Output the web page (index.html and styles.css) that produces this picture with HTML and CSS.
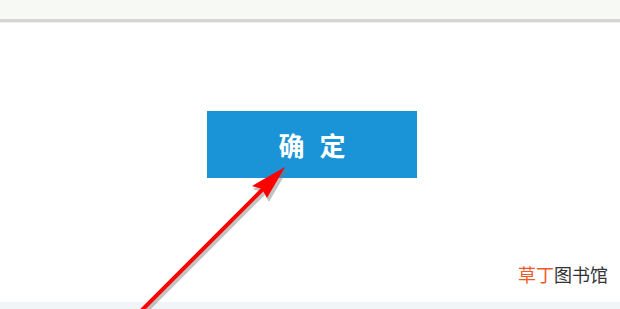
FILE: index.html
```html
<!DOCTYPE html>
<html lang="zh-CN">
<head>
    <meta charset="UTF-8">
    <title>确定</title>
    <link rel="stylesheet" href="styles.css">
</head>
<body>
    <div class="topbar"></div>
    <div class="main">
        <button class="ok-btn">确定</button>
        <div class="mark"><span class="mark-hi">草丁</span>图书馆</div>
    </div>
    <div class="footer-strip"></div>

    <!-- red annotation arrow drawn over the page -->
    <svg class="arrow" width="620" height="309" viewBox="0 0 620 309">
        <g transform="translate(2,3)" fill="#7a7a7a" stroke="#7a7a7a" opacity="0.45">
            <line x1="140" y1="312" x2="268" y2="184" stroke-width="4" />
            <polygon points="285,167 252,186 262,189 267,198" />
        </g>
        <line x1="140" y1="312" x2="268" y2="184" stroke="#ff0000" stroke-width="4" />
        <polygon points="285,167 252,186 262,189 267,198" fill="#ff0000" />
    </svg>
</body>
</html>
```

FILE: styles.css
```css
* {
    box-sizing: border-box;
}

body {
    margin: 0;
    width: 620px;
    height: 309px;
    overflow: hidden;
    background: #fff;
    font-family: "Noto Sans CJK SC", "Noto Sans", sans-serif;
    display: flex;
    flex-direction: column;
    position: relative;
}

.topbar {
    height: 22px;
    background: #f7f9f4;
    border-bottom: 3px solid #d6d7d5;
    box-shadow: 0 1px 0 #eeeeee;
}

.main {
    flex: 1;
    display: flex;
    flex-direction: column;
    align-items: flex-start;
}

.ok-btn {
    margin: 89px 0 0 207px;
    width: 210px;
    height: 67px;
    border: none;
    background: #1a94d6;
    color: #fff;
    font-family: inherit;
    font-size: 26px;
    font-weight: bold;
    letter-spacing: 15px;
    text-indent: 15px;
    padding: 0;
}

.mark {
    margin-top: auto;
    align-self: flex-end;
    margin-right: 12px;
    margin-bottom: 18px;
    font-size: 18px;
    line-height: 20px;
    color: #333;
}

.mark-hi {
    color: #f05a28;
}

.footer-strip {
    height: 7px;
    background: #f1f5f8;
}

.arrow {
    position: absolute;
    left: 0;
    top: 0;
}
```
